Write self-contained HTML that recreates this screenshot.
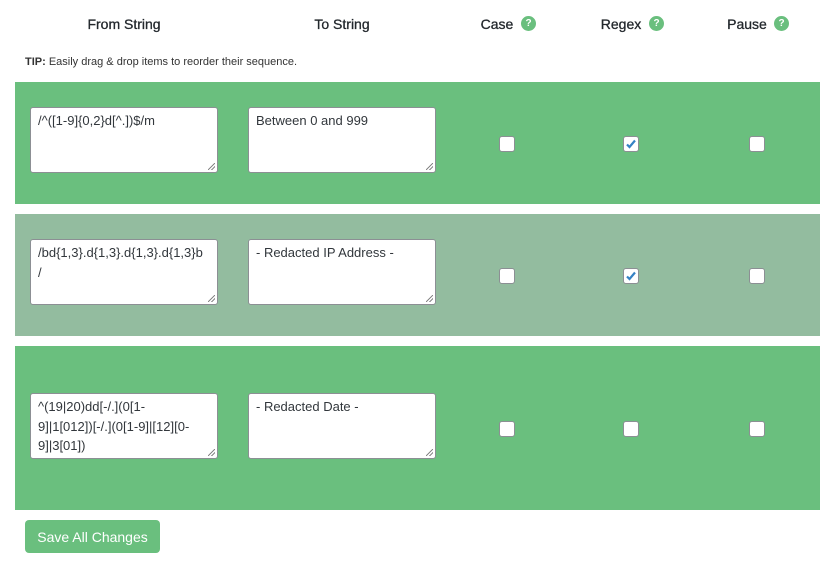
<!DOCTYPE html>
<html><head><style>
body{margin:0;width:820px;height:570px;background:#fff;font-family:"Liberation Sans",sans-serif;color:#23282d;position:relative;overflow:hidden}
.h{position:absolute;top:16px;font-size:14px;font-weight:normal;color:#23282d;transform:translateX(-50%);white-space:nowrap;-webkit-text-stroke:0.3px #23282d}
.q{position:absolute;top:16px;width:15px;height:15px;border-radius:50%;background:#6abf7e;color:#fff;font-size:10px;font-weight:bold;text-align:center;line-height:15px}
.tip{position:absolute;left:25px;top:56px;font-size:11px;color:#333}
.row{position:absolute;left:15px;width:805px;background:#6abf7e}
.ta{position:absolute;background:#fff;border:1px solid #8c8f94;border-radius:3px;font-size:13px;line-height:19.5px;padding:3px 7px;box-sizing:border-box;width:188px;height:66px;color:#32373c;overflow:hidden}
.ta:after{content:"";position:absolute;right:2px;bottom:2px;width:7px;height:7px;background:linear-gradient(135deg,transparent 45%,#888 45%,#888 55%,transparent 55%,transparent 70%,#888 70%,#888 80%,transparent 80%)}
.cb{position:absolute;width:14px;height:14px;border:1px solid #8c8f94;border-radius:3px;background:#fff}
.btn{position:absolute;left:25px;top:520px;width:135px;height:33px;background:#6abf7e;border-radius:4px;color:#fff;font-size:14px;text-align:center;line-height:34px}
</style></head><body>
<div class="h" style="left:124px">From String</div>
<div class="h" style="left:342px">To String</div>
<div class="h" style="left:497px">Case</div><div class="q" style="left:521px">?</div>
<div class="h" style="left:621px">Regex</div><div class="q" style="left:649px">?</div>
<div class="h" style="left:747px">Pause</div><div class="q" style="left:774px">?</div>
<div class="tip"><b>TIP:</b> Easily drag &amp; drop items to reorder their sequence.</div>

<div class="row" style="top:82px;height:122px"></div>
<div class="row" style="top:214px;height:122px;background:#93bc9f"></div>
<div class="row" style="top:346px;height:164px"></div>

<div class="ta" style="left:30px;top:107px">/^([1-9]{0,2}d[^.])$/m</div>
<div class="ta" style="left:248px;top:107px">Between 0 and 999</div>
<div class="ta" style="left:30px;top:239px">/bd{1,3}.d{1,3}.d{1,3}.d{1,3}b<br>/</div>
<div class="ta" style="left:248px;top:239px">- Redacted IP Address -</div>
<div class="ta" style="left:30px;top:393px">^(19|20)dd[-/.](0[1-<br>9]|1[012])[-/.](0[1-9]|[12][0-<br>9]|3[01])</div>
<div class="ta" style="left:248px;top:393px">- Redacted Date -</div>

<div class="cb" style="left:499px;top:136px"></div>
<div class="cb" style="left:623px;top:136px"><svg width="14" height="14" viewBox="0 0 14 14"><path d="M3 7.5l2.5 2.5L11 3.5" stroke="#3582c4" stroke-width="2.2" fill="none"/></svg></div>
<div class="cb" style="left:749px;top:136px"></div>
<div class="cb" style="left:499px;top:268px"></div>
<div class="cb" style="left:623px;top:268px"><svg width="14" height="14" viewBox="0 0 14 14"><path d="M3 7.5l2.5 2.5L11 3.5" stroke="#3582c4" stroke-width="2.2" fill="none"/></svg></div>
<div class="cb" style="left:749px;top:268px"></div>
<div class="cb" style="left:499px;top:421px"></div>
<div class="cb" style="left:623px;top:421px"></div>
<div class="cb" style="left:749px;top:421px"></div>

<div class="btn">Save All Changes</div>
</body></html>
